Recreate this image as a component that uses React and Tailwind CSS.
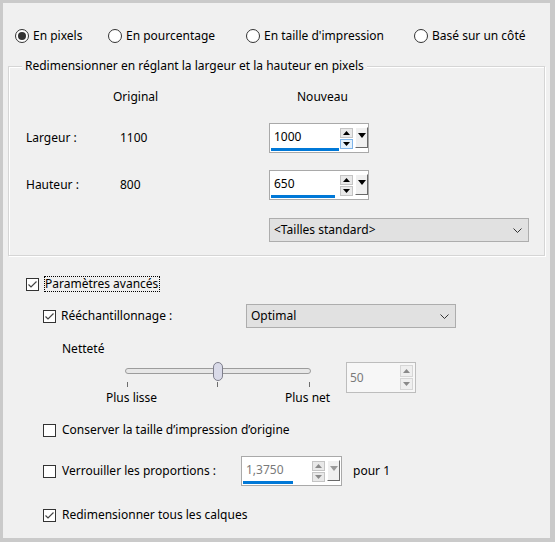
import React from 'react';

const Tri = ({ dir = 'down', color = '#000', w = 7, h = 4 }) => (
  <svg width={w} height={h} viewBox={`0 0 ${w} ${h}`}>
    <path d={dir === 'up' ? `M0 ${h} L${w / 2} 0 L${w} ${h}Z` : `M0 0 L${w / 2} ${h} L${w} 0Z`} fill={color} />
  </svg>
);

const Chevron = () => (
  <svg width="9" height="5" viewBox="0 0 9 5">
    <polyline points="0.5,0.5 4.5,4.5 8.5,0.5" fill="none" stroke="#333" strokeWidth="1" />
  </svg>
);

const Radio = ({ checked, label, className }) => (
  <div className={`flex items-center h-4 gap-[4px] ${className}`}>
    <div className="w-[14px] h-[14px] rounded-full border border-[#333] bg-white flex items-center justify-center">
      {checked && <div className="w-[8px] h-[8px] rounded-full bg-[#333]" />}
    </div>
    <span>{label}</span>
  </div>
);

const Check = ({ checked }) => (
  <div className="w-[13px] h-[13px] border border-[#333] bg-white shrink-0">
    {checked && (
      <svg width="11" height="11" viewBox="0 0 11 11">
        <polyline points="1.5,5.5 4,8 9.5,2.5" fill="none" stroke="#444" strokeWidth="1.2" />
      </svg>
    )}
  </div>
);

// Spin box with blue bar (1000 / 650 / 1,3750)
const SpinBox = ({ value, barClass, disabled, hoverDown, boxClass }) => (
  <div className={`flex h-[30px] border border-[#a9a9a9] bg-white ${boxClass}`}>
    <div className="flex flex-col w-[68px] ml-[1px]">
      <div className={`pl-[3px] pt-[5px] leading-4 ${disabled ? 'text-[#7a7a7a]' : ''}`}>{value}</div>
      <div className={`mt-auto mb-[1px] h-[3px] bg-[#0078d7] ${barClass}`} />
    </div>
    <div className="ml-[1px] mt-[4px] flex flex-col w-[13px] gap-[1px]">
      <div className="h-[10px] border border-[#c4c4c4] bg-[#e9e9e9] flex items-center justify-center">
        <Tri dir="up" color={disabled ? '#8a8a8a' : '#000'} />
      </div>
      <div
        className={`h-[10px] border flex items-center justify-center ${
          hoverDown ? 'border-[#7eb4ea] bg-[#e5f1fb]' : 'border-[#c4c4c4] bg-[#e9e9e9]'
        }`}
      >
        <Tri dir="down" color={disabled ? '#8a8a8a' : '#000'} />
      </div>
    </div>
    <div className="ml-[2px] mt-[3px] w-[13px] h-[21px] bg-[#f0f0f0] border-t border-l border-t-white border-l-white border-r border-b border-r-[#696969] border-b-[#696969] flex justify-center pt-[5px]">
      <Tri dir="down" w={8} h={5} color={disabled ? '#9a9a9a' : '#000'} />
    </div>
  </div>
);

const App = () => {
  return (
    <div className="w-[555px] h-[542px] bg-[#f0f0f0] border-[#cacaca] border-t-[3px] border-l-[3px] border-b-[4px] border-r-[5px] text-[12px] leading-4 text-[#000] font-['Noto_Sans',sans-serif] overflow-hidden">
      {/* mode radios */}
      <div className="flex pt-[25px] pl-[12px]">
        <Radio checked label="En pixels" className="w-[93px]" />
        <Radio label="En pourcentage" className="w-[138px]" />
        <Radio label="En taille d'impression" className="w-[168px]" />
        <Radio label="Basé sur un côté" />
      </div>

      {/* group box */}
      <div className="relative mt-[22px] ml-[5px] w-[537px] h-[190px] border border-[#d5d5d5] shadow-[inset_1px_1px_0_#fff,1px_1px_0_#fff]">
        <span className="absolute left-[13px] -top-[9px] px-[3px] bg-[#f0f0f0]">
          Redimensionner en réglant la largeur et la hauteur en pixels
        </span>
        <div className="flex pt-[22px] pl-[104px]">
          <span className="w-[184px]">Original</span>
          <span>Nouveau</span>
        </div>
        <div className="flex items-center mt-[18px] pl-[17px]">
          <span className="w-[94px]">Largeur :</span>
          <span className="w-[149px]">1100</span>
          <SpinBox value="1000" barClass="w-[68px]" hoverDown boxClass="w-[100px]" />
        </div>
        <div className="flex items-center mt-[17px] pl-[17px]">
          <span className="w-[94px]">Hauteur :</span>
          <span className="w-[149px]">800</span>
          <SpinBox value="650" barClass="w-[64px]" boxClass="w-[100px]" />
        </div>
        <div className="mt-[18px] ml-[260px] w-[260px] h-[24px] border border-[#adadad] bg-[#e1e1e1] flex items-center pl-[4px] pr-[6px]">
          <span>&lt;Tailles standard&gt;</span>
          <span className="ml-auto">
            <Chevron />
          </span>
        </div>
      </div>

      {/* advanced */}
      <div className="flex items-center h-4 mt-[20px] ml-[23px] gap-[5px]">
        <Check checked />
        <span className="border border-dotted border-[#000] leading-[14px] pr-[1px]">Paramètres avancés</span>
      </div>

      <div className="flex items-center h-[24px] mt-[12px] ml-[40px]">
        <Check checked />
        <span className="ml-[5px] w-[185px]">Rééchantillonnage :</span>
        <div className="w-[210px] h-[24px] border border-[#adadad] bg-[#e1e1e1] flex items-center pl-[4px] pr-[6px]">
          <span>Optimal</span>
          <span className="ml-auto">
            <Chevron />
          </span>
        </div>
      </div>

      <div className="mt-[13px] ml-[59px] h-4">Netteté</div>

      <div className="flex items-start mt-[5px] ml-[100px]">
        <div className="flex flex-col w-[240px]">
          <div className="relative h-[28px]">
            <div className="absolute left-[22px] top-[6px] w-[186px] h-[6px] rounded-full border border-[#9c9c9c] bg-[#e7e7e7]" />
            <div className="absolute left-[110px] top-[0px] w-[10px] h-[19px] rounded-full border border-[#7f7f8c] bg-[#d9dae8]" />
            <div className="absolute left-[24px] top-[20px] w-[1px] h-[5px] bg-[#6d6d6d]" />
            <div className="absolute left-[114px] top-[20px] w-[1px] h-[5px] bg-[#6d6d6d]" />
            <div className="absolute left-[206px] top-[20px] w-[1px] h-[5px] bg-[#6d6d6d]" />
          </div>
          <div className="flex pl-[3px] h-4">
            <span className="w-[179px]">Plus lisse</span>
            <span>Plus net</span>
          </div>
        </div>
        <div className="ml-[3px] flex w-[70px] h-[31px] border border-[#bdbdbd] bg-[#f7f7f7]">
          <div className="flex items-center pl-[3px] w-[53px] text-[#7a7a7a]">50</div>
          <div className="mt-[2px] flex flex-col w-[13px] gap-[1px]">
            <div className="h-[12px] border border-[#d6d6d6] bg-[#efefef] flex items-center justify-center">
              <Tri dir="up" color="#8a8a8a" />
            </div>
            <div className="h-[12px] border border-[#d6d6d6] bg-[#efefef] flex items-center justify-center">
              <Tri dir="down" color="#8a8a8a" />
            </div>
          </div>
        </div>
      </div>

      <div className="flex items-center h-4 mt-[16px] ml-[40px] gap-[6px]">
        <Check />
        <span>Conserver la taille d’impression d’origine</span>
      </div>

      <div className="flex items-center h-[30px] mt-[18px] ml-[40px]">
        <Check />
        <span className="ml-[6px] w-[179px]">Verrouiller les proportions :</span>
        <SpinBox value="1,3750" barClass="w-[50px]" disabled boxClass="w-[101px]" />
        <span className="ml-[11px]">pour 1</span>
      </div>

      <div className="flex items-center h-4 mt-[21px] ml-[40px] gap-[6px]">
        <Check checked />
        <span>Redimensionner tous les calques</span>
      </div>
    </div>
  );
};

export default App;
